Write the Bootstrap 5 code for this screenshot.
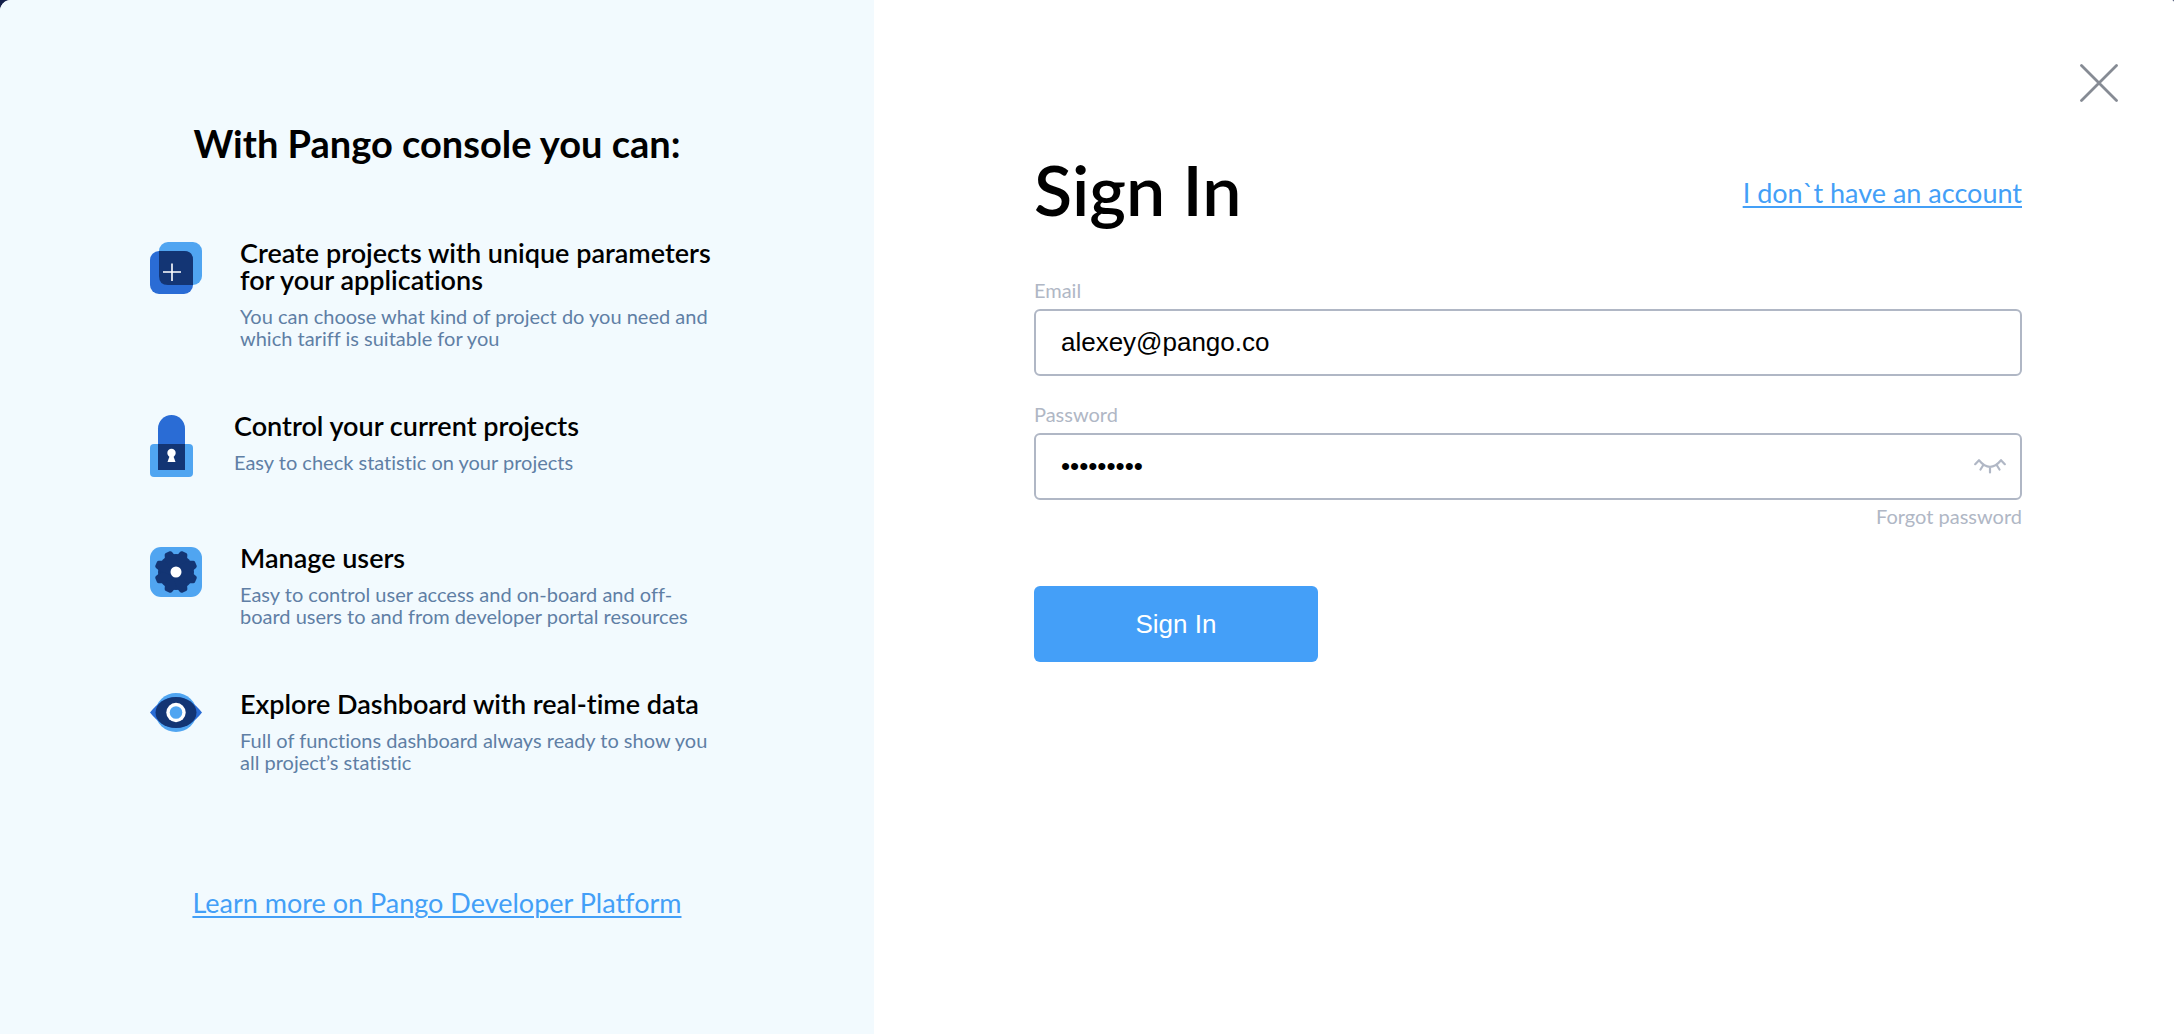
<!DOCTYPE html>
<html lang="en">
<head>
<meta charset="utf-8">
<meta name="viewport" content="width=device-width, initial-scale=1">
<title>Pango – Sign In</title>
<link href="https://cdn.jsdelivr.net/npm/bootstrap@5.3.0/dist/css/bootstrap.min.css" rel="stylesheet">
<style>
  body { background: #14204a; font-family: Lato, "Open Sans", sans-serif; font-variant-ligatures: none; color: #000; }
  a { color: #439ff7; }
  .dialog { background: #fff; border-radius: 11px 2px 0 0; overflow: hidden; }
  .promo { background: #f2fafe; padding: 120px 150px 64px; }
  .promo-title { font-size: 38px; line-height: 46px; font-weight: 700; margin-bottom: 73px; }
  .features { gap: 63px; margin-bottom: 114px; padding-right: 8px; }
  .feature { gap: 38px; }
  .feature svg { margin-top: 3px; }
  .feature h3 { font-size: 27px; line-height: 27px; font-weight: 600; margin-bottom: 12px; }
  .feature p { font-size: 20px; line-height: 22px; color: #5f7fa5; }
  .big-link { font-size: 27px; line-height: 32px; text-underline-offset: 3px; text-decoration-thickness: 2px; }
  .close-row { padding: 64px 56px 0; margin-bottom: 45px; }
  .form-area { padding: 0 152px 64px 160px; }
  .form-head { margin-bottom: 47px; }
  .form-head h1 { font-size: 70px; line-height: 84px; font-weight: 600; }
  .field-label, .forgot { font-size: 20px; line-height: 24px; color: #b0b7c5; }
  .field-label { margin-bottom: 7px; }
  .field-group { margin-bottom: 26px; }
  .field-box, .field-box:focus { height: 67px; border: 2px solid #b0b7c5; border-radius: 6px; padding: 0 25px; font: 26px "Liberation Sans", Arial, sans-serif; color: #000; }
  .peek { right: 16px; }
  .forgot { margin-top: 4px; margin-bottom: 58px; }
  .submit { width: 284px; height: 76px; background: #449ff8; color: #fff; border-radius: 6px; font: 26px "Liberation Sans", Arial, sans-serif; }
  @media (min-width: 1200px) { .promo { width: 40.2%; } }
  @media (max-width: 1600px) {
    .promo { padding-left: 48px; padding-right: 48px; }
    .form-area { padding-left: 56px; padding-right: 56px; }
  }
</style>
</head>
<body>
<main class="dialog row g-0 min-vh-100">
  <aside class="promo col-12 col-xl-5">
    <h2 class="promo-title text-center">With Pango console you can:</h2>
    <div class="features d-flex flex-column">
      <div class="feature d-flex align-items-start">
        <svg class="flex-shrink-0" width="52" height="52" viewBox="0 0 52 52" aria-hidden="true">
          <rect x="9" width="43" height="43" rx="9" fill="#50a5f1"/>
          <rect y="9" width="43" height="43" rx="9" fill="#2a6cd5"/>
          <path d="M9 9H34Q43 9 43 18V43H18Q9 43 9 34Z" fill="#133574"/>
          <path d="M22 21.500V39M13 30H31" stroke="#fff" stroke-width="1.600"/>
        </svg>
        <div>
          <h3>Create projects with unique parameters for your applications</h3>
          <p class="mb-0">You can choose what kind of project do you need and which tariff is suitable for you</p>
        </div>
      </div>
      <div class="feature d-flex align-items-start">
        <svg class="flex-shrink-0" width="46" height="66" viewBox="0 0 46 66" aria-hidden="true">
          <path d="M8 40V13.500a13.500 13.500 0 0 1 27 0V40Z" fill="#2a6cd5"/>
          <rect y="29" width="43" height="33" rx="4" fill="#50a5f1"/>
          <path d="M8 29H35V55H8Z" fill="#133574"/>
          <circle cx="21.500" cy="38" r="4.200" fill="#fff"/>
          <path d="M20 40H23L25.500 47H17.500Z" fill="#fff"/>
        </svg>
        <div>
          <h3>Control your current projects</h3>
          <p class="mb-0">Easy to check statistic on your projects</p>
        </div>
      </div>
      <div class="feature d-flex align-items-start">
        <svg class="flex-shrink-0" width="52" height="50" viewBox="0 0 52 50" aria-hidden="true">
          <rect width="52" height="50" rx="11" fill="#50a5f1"/>
          <g fill="#133574" transform="translate(26 25)">
            <circle r="18"/>
            <g transform="rotate(22.5)">
              <path id="bar" d="M-5 -17L-4 -20Q-3.500 -21.500 -2 -21.500H2Q3.500 -21.500 4 -20L5 -17V17L4 20Q3.500 21.500 2 21.500H-2Q-3.500 21.500 -4 20L-5 17Z"/>
              <use href="#bar" transform="rotate(45)"/>
              <use href="#bar" transform="rotate(90)"/>
              <use href="#bar" transform="rotate(135)"/>
            </g>
            <circle r="5.500" fill="#fff"/>
          </g>
        </svg>
        <div>
          <h3>Manage users</h3>
          <p class="mb-0">Easy to control user access and on-board and off-board users to and from developer portal resources</p>
        </div>
      </div>
      <div class="feature d-flex align-items-start">
        <svg class="flex-shrink-0" width="52" height="39" viewBox="0 0 52 39" aria-hidden="true">
          <ellipse cx="26" cy="19.500" rx="20.500" ry="19.500" fill="#50a5f1"/>
          <path d="M0 19.500C8 10 15 4 26 4S44 10 52 19.500C44 29 37 35 26 35S8 29 0 19.500Z" fill="#2a6cd5"/>
          <ellipse cx="26" cy="19.500" rx="20.500" ry="15.500" fill="#133574"/>
          <circle cx="26" cy="19.500" r="9.700" fill="#fff"/>
          <circle cx="26" cy="19.500" r="6.300" fill="#50a5f1"/>
        </svg>
        <div>
          <h3>Explore Dashboard with real-time data</h3>
          <p class="mb-0">Full of functions dashboard always ready to show you all project’s statistic</p>
        </div>
      </div>
    </div>
    <div class="text-center"><a class="big-link" href="#">Learn more on Pango Developer Platform</a></div>
  </aside>

  <section class="col-12 col-xl">
    <div class="close-row d-flex justify-content-end">
      <button type="button" class="btn p-0 border-0 lh-1" aria-label="Close">
        <svg class="d-block" width="38" height="38" viewBox="0 0 38 38" fill="none" stroke="#868b94" stroke-width="2.800" stroke-linecap="round"><path d="M1.500 1.500L36.500 36.500M36.500 1.500L1.500 36.500"/></svg>
      </button>
    </div>
    <form class="form-area">
      <div class="form-head d-flex justify-content-between align-items-center">
        <h1 class="mb-0">Sign In</h1>
        <a class="big-link pt-2" href="#">I don`t have an account</a>
      </div>
      <div class="field-group">
        <label class="field-label d-block" for="email">Email</label>
        <input class="form-control field-box shadow-none" type="email" id="email" value="alexey@pango.co">
      </div>
      <div>
        <label class="field-label d-block" for="password">Password</label>
        <div class="position-relative">
          <input class="form-control field-box shadow-none" type="password" id="password" value="pango1234">
          <button type="button" class="peek btn p-0 border-0 position-absolute top-50 translate-middle-y" aria-label="Show password">
            <svg class="d-block" width="32" height="22" viewBox="0 0 32 22" fill="none" stroke="#b0b7c5" stroke-width="2.200" stroke-linecap="round" stroke-linejoin="round"><path d="M1.200 8.200L5 4.200Q16 17.500 27 4.200L30.800 8.200M9 9.500L6.500 13.500M16 11.500V16.500M23 9.500L25.500 13.500"/></svg>
          </button>
        </div>
      </div>
      <div class="forgot text-end"><a class="text-reset text-decoration-none" href="#">Forgot password</a></div>
      <button type="submit" class="btn submit border-0 p-0">Sign In</button>
    </form>
  </section>
</main>
<script src="https://cdn.jsdelivr.net/npm/bootstrap@5.3.0/dist/js/bootstrap.bundle.min.js"></script>
</body>
</html>
